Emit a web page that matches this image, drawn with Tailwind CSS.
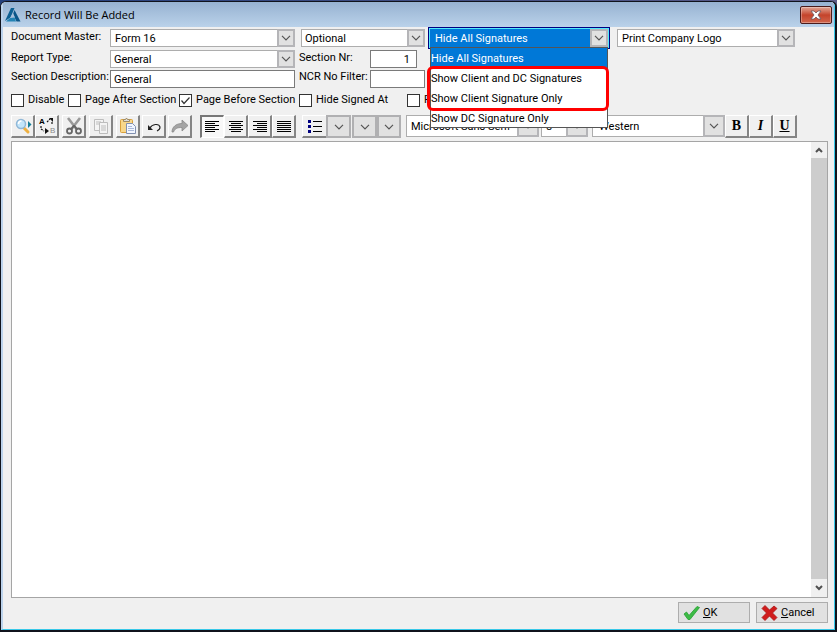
<!DOCTYPE html>
<html lang="en">

<head>
    <meta charset="UTF-8">
    <meta name="viewport" content="width=device-width, initial-scale=1.0">
    <script src="https://cdn.jsdelivr.net/npm/@tailwindcss/browser@4"></script>
    <title>Record Will Be Added</title>
</head>

<body class="h-screen flex flex-col overflow-hidden bg-linear-to-r from-[#24407c] to-[#5c5c88] pt-px font-[Roboto,'Liberation_Sans',sans-serif] text-[11px] leading-4 text-black">

    <svg class="hidden">
        <symbol id="chevron" viewBox="0 0 10 6">
            <path d="M1 .8l4 4 4-4" fill="none" stroke="#555" stroke-width="1.2" />
        </symbol>
    </svg>

    <div class="flex-1 min-h-0 flex flex-col bg-[#f0f0f0] border-t border-l border-r-2 border-b-2 border-[#10131c] rounded-t-md overflow-hidden">
        <div class="flex-1 min-h-0 flex flex-col border-l-2 border-l-[#bcd3ec] border-r border-b border-r-[#38c8e8] border-b-[#38c8e8]">

            <header class="flex h-[25px] shrink-0 items-center bg-linear-to-b from-[#97b2d1] to-[#bad2ea] px-[2px]">
                <svg class="w-4 h-4" viewBox="0 0 16 16">
                    <path d="M6 1h3.500L7 7l-1.500 3.500L0 14z" fill="#0d5f92" />
                    <path d="M9.500 3l6 11.500h-4L8 7z" fill="#0a5588" />
                    <path d="M5 11l4-2 2 5.500H1z" fill="#2383b4" />
                    <path d="M8 6L5 11l5-.5z" fill="#a6bfdb" />
                </svg>
                <h1 class="ml-1 flex-1 font-['Open_Sans',sans-serif] text-[11px]">Record Will Be Added</h1>
                <button type="button" aria-label="Close" class="grid h-[18px] w-8 place-items-center rounded-[2px] border border-[#4b1b1b] bg-linear-to-b from-[#e0a595] via-[#c4432b] to-[#d0654c] ring-1 ring-inset ring-white/30">
                    <svg class="w-3 h-[10px]" viewBox="0 0 12 10">
                        <path d="M1 1h3l2 2 2-2h3L8 5l3 4H8L6 7 4 9H1l3-4z" fill="#fff" stroke="#6b5560" stroke-width=".8" />
                    </svg>
                </button>
            </header>

            <main class="flex-1 min-h-0 flex flex-col pl-2 pr-[6px] pt-[2px] pb-[6px]">
                <form class="flex-1 min-h-0 flex flex-col">

                    <div class="flex h-[21px] shrink-0 items-start">
                        <label for="master" class="w-[99px]">Document Master:</label>
                        <div class="relative h-[18px] w-[185px]">
                            <select id="master" class="block h-full w-full appearance-none border border-[#adadad] bg-white pt-px pl-1">
                                <option>Form 16</option>
                            </select>
                            <span class="pointer-events-none absolute inset-y-0 right-0 grid w-[18px] place-items-center border-2 border-[#b5b5b8] bg-[#e1e1e1]"><svg class="w-[10px] h-[6px]"><use href="#chevron" /></svg></span>
                        </div>
                        <div class="relative ml-[6px] h-[18px] w-[124px]">
                            <select aria-label="Requirement" class="block h-full w-full appearance-none border border-[#adadad] bg-white pt-px pl-[3px]">
                                <option>Optional</option>
                            </select>
                            <span class="pointer-events-none absolute inset-y-0 right-0 grid w-[18px] place-items-center border-2 border-[#b5b5b8] bg-[#e1e1e1]"><svg class="w-[10px] h-[6px]"><use href="#chevron" /></svg></span>
                        </div>
                        <div class="relative ml-[5px] h-[18px] w-[178px]">
                            <select aria-label="Signatures" class="block h-full w-full appearance-none bg-[#0078d7] pt-px pl-[5px] text-white ring-1 ring-cyan-300 outline-1 outline-offset-1 outline-[#000080]">
                                <option>Hide All Signatures</option>
                            </select>
                            <span class="pointer-events-none absolute inset-y-0 right-0 grid w-[18px] place-items-center border-2 border-[#b5b5b8] bg-[#e1e1e1]"><svg class="w-[10px] h-[6px]"><use href="#chevron" /></svg></span>
                            <!-- open list -->
                            <ul role="listbox" class="absolute top-[18px] left-0 z-10 w-full border border-[#555] bg-white">
                                <li role="option" aria-selected="true" class="h-5 bg-[#0078d7] pt-[3px] text-white">Hide All Signatures</li>
                                <li role="option" class="h-5 pt-[3px]">Show Client and DC Signatures</li>
                                <li role="option" class="h-5 pt-[3px]">Show Client Signature Only</li>
                                <li role="option" class="h-[19px] pt-[3px]">Show DC Signature Only</li>
                            </ul>
                            <div class="pointer-events-none absolute top-[37px] -left-[3px] z-20 h-[45px] w-[182px] rounded-md border-3 border-[#ff0000]"></div>
                        </div>
                        <div class="relative ml-[9px] h-[18px] w-[178px]">
                            <select aria-label="Logo" class="block h-full w-full appearance-none border border-[#adadad] bg-white pt-px pl-1">
                                <option>Print Company Logo</option>
                            </select>
                            <span class="pointer-events-none absolute inset-y-0 right-0 grid w-[18px] place-items-center border-2 border-[#b5b5b8] bg-[#e1e1e1]"><svg class="w-[10px] h-[6px]"><use href="#chevron" /></svg></span>
                        </div>
                    </div>

                    <div class="flex h-5 shrink-0 items-start">
                        <label for="type" class="w-[99px]">Report Type:</label>
                        <div class="relative h-[18px] w-[185px]">
                            <select id="type" class="block h-full w-full appearance-none border border-[#adadad] bg-white pt-px pl-[3px]">
                                <option>General</option>
                            </select>
                            <span class="pointer-events-none absolute inset-y-0 right-0 grid w-[18px] place-items-center border-2 border-[#b5b5b8] bg-[#e1e1e1]"><svg class="w-[10px] h-[6px]"><use href="#chevron" /></svg></span>
                        </div>
                        <label for="nr" class="ml-1 w-[71px]">Section Nr:</label>
                        <input id="nr" type="text" value="1" class="h-[18px] w-[47px] border border-[#7a7a7a] bg-white pr-[6px] text-right">
                    </div>

                    <div class="flex h-[18px] shrink-0 items-start">
                        <label for="desc" class="w-[99px] leading-[14px]">Section Description:</label>
                        <input id="desc" type="text" value="General" class="h-[18px] w-[185px] border border-[#7a7a7a] bg-white pl-[3px]">
                        <label for="ncr" class="ml-1 w-[71px] leading-[14px]">NCR No Filter:</label>
                        <input id="ncr" type="text" class="h-[18px] w-[55px] border border-[#7a7a7a] bg-white px-1">
                    </div>

                    <div class="mt-1 flex h-4 shrink-0 items-center">
                        <label class="flex w-[57px] items-center gap-1 whitespace-nowrap"><input type="checkbox" class="size-[13px] shrink-0 appearance-none border border-[#333] bg-white">Disable</label>
                        <label class="flex w-[111px] items-center gap-1 whitespace-nowrap"><input type="checkbox" class="size-[13px] shrink-0 appearance-none border border-[#333] bg-white">Page After Section</label>
                        <label class="relative flex w-[120px] items-center gap-1 whitespace-nowrap"><input type="checkbox" checked class="size-[13px] shrink-0 appearance-none border border-[#333] bg-white">
                            <svg class="pointer-events-none absolute left-0 size-[13px]" viewBox="0 0 13 13"><path d="M2.500 6.500l2.500 3 5.500-6" fill="none" stroke="#333" stroke-width="1.2" /></svg>Page Before Section</label>
                        <label class="flex w-[108px] items-center gap-1 whitespace-nowrap"><input type="checkbox" class="size-[13px] shrink-0 appearance-none border border-[#333] bg-white">Hide Signed At</label>
                        <label class="flex items-center gap-1"><input type="checkbox" class="size-[13px] shrink-0 appearance-none border border-[#333] bg-white">F</label>
                    </div>

                    <div class="mt-[7px] flex h-[23px] shrink-0 items-stretch">
                        <button type="button" aria-label="Find" class="grid w-6 place-items-center border border-r-2 border-b-2 border-t-white border-l-white border-r-[#858585] border-b-[#858585]">
                            <svg class="w-5 h-5" viewBox="0 0 20 20">
                                <path d="M11 12l4 4" stroke="#eeb040" stroke-width="3" stroke-linecap="round" />
                                <circle cx="8" cy="8" r="4.500" fill="#c4e6fa" stroke="#90b8d8" stroke-width="1.500" />
                                <path d="M5.500 8a3 3 0 0 1 3-3" fill="none" stroke="#fff" stroke-width="1.500" />
                                <path d="M15 5l3.500 3.500L15 12z" fill="#178098" />
                            </svg>
                        </button>
                        <button type="button" aria-label="Replace" class="grid w-6 place-items-center border border-r-2 border-b-2 border-t-white border-l-white border-r-[#858585] border-b-[#858585]">
                            <svg class="w-5 h-5" viewBox="0 0 20 20">
                                <text x="2" y="8" font-size="8" font-weight="bold" font-family="Liberation Sans">A</text>
                                <text x="13" y="17" font-size="8" fill="#888" font-family="Liberation Sans">B</text>
                                <path d="M10 6l3-3M15 6v3M4 10v3l3 2" fill="none" stroke="#111" stroke-width="1.200" stroke-dasharray="2 1" />
                                <path d="M12 2h4v4zM8 12l4 3-4 3z" fill="#111" />
                            </svg>
                        </button>
                        <button type="button" aria-label="Cut" class="ml-[3px] grid w-6 place-items-center border border-r-2 border-b-2 border-t-white border-l-white border-r-[#858585] border-b-[#858585]">
                            <svg class="w-5 h-5" viewBox="0 0 20 20" fill="none">
                                <path d="M4 2l8.500 11M16 2L7.500 13" stroke="#999" stroke-width="2.600" />
                                <path d="M10 9.500l-3 4M10 9.500l3 4" stroke="#666" stroke-width="2" />
                                <circle cx="5.500" cy="15" r="2.500" stroke="#666" stroke-width="1.800" />
                                <circle cx="14.500" cy="15" r="2.500" stroke="#666" stroke-width="1.800" />
                            </svg>
                        </button>
                        <button type="button" aria-label="Copy" class="ml-[3px] grid w-6 place-items-center border border-r-2 border-b-2 border-t-white border-l-white border-r-[#858585] border-b-[#858585]">
                            <svg class="w-5 h-5" viewBox="0 0 20 20" fill="#f4f4f4" stroke="#bdbdbd">
                                <path d="M3.500 3.500h9v11h-9zM5 6h5M5 8h5" />
                                <path d="M8.500 6.500h8v11h-8zM10 10h5M10 12h5M10 14h5" />
                            </svg>
                        </button>
                        <button type="button" aria-label="Paste" class="ml-[3px] grid w-6 place-items-center border border-r-2 border-b-2 border-t-white border-l-white border-r-[#858585] border-b-[#858585]">
                            <svg class="w-5 h-5" viewBox="0 0 20 20">
                                <rect x="2.500" y="3.500" width="12" height="13" rx="1" fill="#f8d78a" stroke="#d9a03c" />
                                <path d="M5.500 5.500v-2h2l1-1.500 1 1.500h2v2z" fill="#ddd" stroke="#a08a60" />
                                <path d="M8.500 7.500h6l3 3v7h-9z" fill="#f2f6ff" stroke="#8190b0" />
                                <path d="M10 10.500h4M10 12.500h6M10 14.500h6" stroke="#a9b8d8" />
                            </svg>
                        </button>
                        <button type="button" aria-label="Undo" class="ml-[2px] grid w-6 place-items-center border border-r-2 border-b-2 border-t-white border-l-white border-r-[#858585] border-b-[#858585]">
                            <svg class="w-5 h-5" viewBox="0 0 20 20">
                                <path d="M6 12c2-4 9-5 10-1 .3 2-1 3-3 4" fill="none" stroke="#222" stroke-width="1.100" />
                                <path d="M4 9v5h5z" fill="#222" />
                            </svg>
                        </button>
                        <button type="button" aria-label="Redo" class="ml-[2px] grid w-6 place-items-center border border-r-2 border-b-2 border-t-white border-l-white border-r-[#858585] border-b-[#858585]">
                            <svg class="w-5 h-5" viewBox="0 0 20 20">
                                <path d="M2 16c0-5 4-8.500 10-8.500V4l6 5.500-6 5.500v-3.500c-5 0-7 1-8.500 4.500z" fill="#a4a4a4" stroke="#888" stroke-width=".8" />
                            </svg>
                        </button>

                        <button type="button" aria-label="Align left" aria-pressed="true" class="ml-2 grid w-6 place-items-center border border-t-2 border-l-2 border-t-[#777] border-l-[#777] border-r-white border-b-white bg-[#f8f8f8]">
                            <svg class="w-4 h-4" viewBox="0 0 16 16" shape-rendering="crispEdges"><path d="M0 2.500h14M0 4.500h10M0 6.500h14M0 8.500h10M0 10.500h14M0 12.500h10" stroke="#000" /></svg>
                        </button>
                        <button type="button" aria-label="Align center" class="grid w-6 place-items-center border border-r-2 border-b-2 border-t-white border-l-white border-r-[#858585] border-b-[#858585]">
                            <svg class="w-4 h-4" viewBox="0 0 16 16" shape-rendering="crispEdges"><path d="M1 3.500h14M3 5.500h10M1 7.500h14M3 9.500h10M1 11.500h14M3 13.500h10" stroke="#000" /></svg>
                        </button>
                        <button type="button" aria-label="Align right" class="grid w-6 place-items-center border border-r-2 border-b-2 border-t-white border-l-white border-r-[#858585] border-b-[#858585]">
                            <svg class="w-4 h-4" viewBox="0 0 16 16" shape-rendering="crispEdges"><path d="M1 3.500h14M5 5.500h10M1 7.500h14M5 9.500h10M1 11.500h14M5 13.500h10" stroke="#000" /></svg>
                        </button>
                        <button type="button" aria-label="Justify" class="grid w-6 place-items-center border border-r-2 border-b-2 border-t-white border-l-white border-r-[#858585] border-b-[#858585]">
                            <svg class="w-4 h-4" viewBox="0 0 16 16" shape-rendering="crispEdges"><path d="M1 3.500h14M1 5.500h14M1 7.500h14M1 9.500h14M1 11.500h14M1 13.500h14" stroke="#000" /></svg>
                        </button>

                        <button type="button" aria-label="Bullets" class="ml-[6px] grid w-6 place-items-center border border-r-0 border-b-2 border-t-white border-l-white border-b-[#858585]">
                            <svg class="w-4 h-4" viewBox="0 0 16 16" shape-rendering="crispEdges"><path d="M1 2h3v3H1zM1 7h3v3H1zM1 12h3v3H1z" fill="#000080" /><path d="M6 3.500h9M6 8.500h9M6 13.500h9" stroke="#000" /></svg>
                        </button>
                        <button type="button" aria-label="Bullet style" class="grid w-[25px] place-items-center border-2 border-[#b0b0b2] bg-[#e1e1e1]"><svg class="w-[10px] h-[6px]"><use href="#chevron" /></svg></button>
                        <button type="button" aria-label="Text color" class="ml-px grid w-[25px] place-items-center border-2 border-[#b0b0b2] bg-[#e1e1e1]"><svg class="w-[10px] h-[6px]"><use href="#chevron" /></svg></button>
                        <button type="button" aria-label="Highlight" class="grid w-6 place-items-center border-2 border-[#b0b0b2] bg-[#e1e1e1]"><svg class="w-[10px] h-[6px]"><use href="#chevron" /></svg></button>

                        <div class="relative ml-[5px] h-[22px] w-[133px]">
                            <select aria-label="Font" class="block h-full w-full appearance-none border border-[#adadad] bg-white pt-px pl-1">
                                <option>Microsoft Sans Serif</option>
                            </select>
                            <span class="pointer-events-none absolute inset-y-0 right-0 grid w-[22px] place-items-center border-2 border-[#b5b5b8] bg-[#e1e1e1]"><svg class="w-[10px] h-[6px]"><use href="#chevron" /></svg></span>
                        </div>
                        <div class="relative ml-[2px] h-[22px] w-[47px]">
                            <select aria-label="Font size" class="block h-full w-full appearance-none border border-[#adadad] bg-white pt-px pl-1">
                                <option>8</option>
                            </select>
                            <span class="pointer-events-none absolute inset-y-0 right-0 grid w-[22px] place-items-center border-2 border-[#b5b5b8] bg-[#e1e1e1]"><svg class="w-[10px] h-[6px]"><use href="#chevron" /></svg></span>
                        </div>
                        <div class="relative ml-1 h-[22px] w-[133px]">
                            <select aria-label="Script" class="block h-full w-full appearance-none border border-[#adadad] bg-white pt-px pl-[6px]">
                                <option>Western</option>
                            </select>
                            <span class="pointer-events-none absolute inset-y-0 right-0 grid w-[22px] place-items-center border-2 border-[#b5b5b8] bg-[#e1e1e1]"><svg class="w-[10px] h-[6px]"><use href="#chevron" /></svg></span>
                        </div>
                        <button type="button" class="w-6 border border-r-2 border-b-2 border-t-white border-l-white border-r-[#858585] border-b-[#858585] font-['Liberation_Serif',serif] text-sm leading-5 font-bold">B</button>
                        <button type="button" class="w-6 border border-r-2 border-b-2 border-t-white border-l-white border-r-[#858585] border-b-[#858585] font-['Liberation_Serif',serif] text-sm leading-5 font-bold italic">I</button>
                        <button type="button" class="w-6 border border-r-2 border-b-2 border-t-white border-l-white border-r-[#858585] border-b-[#858585] font-['Liberation_Serif',serif] text-sm leading-5 font-bold underline">U</button>
                    </div>

                    <div class="mt-[3px] flex flex-1 min-h-0 border border-[#a5a5a5] bg-white">
                        <textarea aria-label="Section text" class="flex-1 resize-none p-1 outline-none"></textarea>
                        <div class="flex w-4 flex-col bg-[#f0f0f0]">
                            <span class="grid h-4 place-items-center"><svg class="w-2 h-[6px]" viewBox="0 0 8 6"><path d="M1 5l3-3 3 3" fill="none" stroke="#505050" stroke-width="2" /></svg></span>
                            <span class="flex-1 bg-[#cdcdcd]"></span>
                            <span class="grid h-[18px] place-items-center"><svg class="w-2 h-[6px]" viewBox="0 0 8 6"><path d="M1 1l3 3 3-3" fill="none" stroke="#505050" stroke-width="2" /></svg></span>
                        </div>
                    </div>

                    <div class="mt-1 flex shrink-0 justify-end gap-[6px]">
                        <button type="submit" class="flex h-[21px] w-[72px] items-center gap-[3px] border border-[#adadad] bg-[#e1e1e1] pl-1">
                            <svg class="w-[17px] h-4" viewBox="0 0 17 16"><path d="M1 9l2.500-2L6 10.500 14 1.500l2.500 1L7 14.500H5z" fill="#3dbb46" stroke="#23a030" stroke-width=".8" /></svg>
                            <span><u>O</u>K</span>
                        </button>
                        <button type="button" class="flex h-[21px] w-[72px] items-center gap-[3px] border border-[#adadad] bg-[#e1e1e1] pl-1">
                            <svg class="w-[17px] h-4" viewBox="0 0 17 16"><path d="M1 3.500L4 .5l4.500 4.500L13 1l3 2.500L11.500 8l4.500 4.500-3 3L8.500 11 4 15.500l-3-3L5.500 8z" fill="#d01c1c" stroke="#a81414" stroke-width=".8" /></svg>
                            <span><u>C</u>ancel</span>
                        </button>
                    </div>
                </form>
            </main>
        </div>
    </div>
</body>

</html>
